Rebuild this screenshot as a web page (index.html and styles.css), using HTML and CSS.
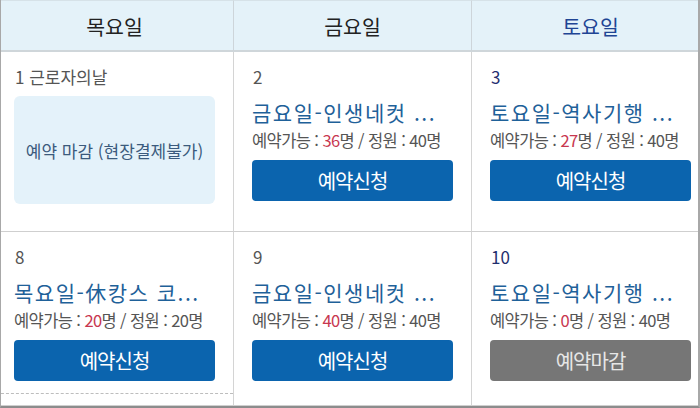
FILE: index.html
```html
<!DOCTYPE html>
<html lang="ko">
<head>
<meta charset="utf-8">
<link rel="stylesheet" href="styles.css">
</head>
<body>
<div class="frame">
  <div class="cal">
    <div class="head">목요일</div>
    <div class="head">금요일</div>
    <div class="head head--sat">토요일</div>

    <div class="cell">
      <div class="date">1 근로자의날</div>
      <div class="closed-box">예약 마감 (현장결제불가)</div>
    </div>
    <div class="cell">
      <div class="date">2</div>
      <div class="title">금요일-인생네컷 ...</div>
      <div class="info">예약가능 : <span class="num">36</span>명 / 정원 : 40명</div>
      <div class="btn">예약신청</div>
    </div>
    <div class="cell">
      <div class="date date--sat">3</div>
      <div class="title">토요일-역사기행 ...</div>
      <div class="info">예약가능 : <span class="num">27</span>명 / 정원 : 40명</div>
      <div class="btn">예약신청</div>
    </div>

    <div class="cell">
      <div class="event event--sep">
        <div class="date">8</div>
        <div class="title">목요일-休캉스 코...</div>
        <div class="info">예약가능 : <span class="num">20</span>명 / 정원 : 20명</div>
        <div class="btn">예약신청</div>
      </div>
    </div>
    <div class="cell">
      <div class="date">9</div>
      <div class="title">금요일-인생네컷 ...</div>
      <div class="info">예약가능 : <span class="num">40</span>명 / 정원 : 40명</div>
      <div class="btn">예약신청</div>
    </div>
    <div class="cell">
      <div class="date date--sat">10</div>
      <div class="title">토요일-역사기행 ...</div>
      <div class="info">예약가능 : <span class="num">0</span>명 / 정원 : 40명</div>
      <div class="btn btn--off">예약마감</div>
    </div>
  </div>
</div>
</body>
</html>
```

FILE: styles.css
```css
* { box-sizing: border-box; }
html, body { margin: 0; padding: 0; background: #fff; }
body {
  font-family: "Noto Sans CJK KR", "Noto Sans", sans-serif;
  color: #333;
}
.frame {
  width: 700px;
  height: 408px;
  overflow: hidden;
  border-left: 1px solid #a8a8a8;
  border-right: 2px solid #a8a8a8;
  border-bottom: 2px solid #8c8c8c;
}
.cal {
  display: grid;
  width: 714px;
  margin-left: -5px;
  grid-template-columns: 238px 238px 238px;
  grid-template-rows: 52px 180px 174px;
}
.head {
  background: #e4f2f9;
  border-bottom: 2px solid #cfd6da;
  border-right: 1px solid #cdd5da;
  border-top: 1px solid #d6e2e8;
  display: flex;
  align-items: center;
  justify-content: center;
  font-size: 20.5px;
  color: #222;
}
.head--sat { color: #1f4594; }
.cell {
  border-right: 1px solid #d4d4d4;
  border-bottom: 1px solid #cfcfcf;
  padding: 14px 18px 0 18px;
}
.date {
  font-size: 17px;
  line-height: 22px;
  color: #555;
  padding-left: 1px;
}
.date--sat { color: #1f2f6e; }
.title {
  margin-top: 9px;
  font-size: 21px;
  line-height: 30px;
  letter-spacing: 1.5px;
  color: #1f6199;
  white-space: nowrap;
  overflow: hidden;
}
.info {
  margin-top: 3px;
  font-size: 16.5px;
  line-height: 20px;
  color: #555;
  letter-spacing: -0.6px;
  white-space: nowrap;
}
.num { color: #c8374f; }
.btn {
  margin-top: 10px;
  height: 41px;
  border-radius: 4px;
  background: #0b64ae;
  color: #fff;
  font-size: 20px;
  letter-spacing: -1px;
  display: flex;
  align-items: center;
  justify-content: center;
}
.btn--off {
  background: #767676;
  color: #e6e6e6;
}
.closed-box {
  margin-top: 8px;
  height: 108px;
  border-radius: 6px;
  background: #e4f2fa;
  color: #3b5b7d;
  font-size: 17px;
  display: flex;
  align-items: center;
  justify-content: center;
}
.event--sep {
  padding-bottom: 12px;
  border-bottom: 1px dashed #bdbdbd;
  margin: 0 -18px;
  padding-left: 18px;
  padding-right: 18px;
}
```
